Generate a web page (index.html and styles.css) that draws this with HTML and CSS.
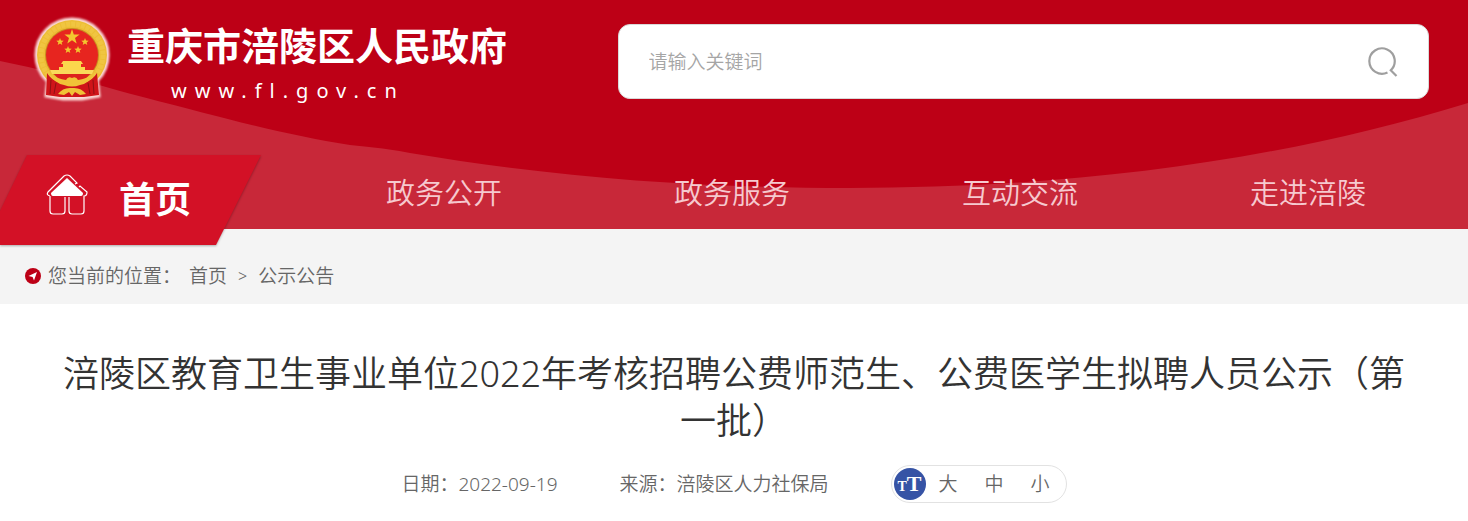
FILE: index.html
```html
<!DOCTYPE html>
<html lang="zh-CN">
<head>
    <meta charset="UTF-8">
    <meta name="viewport" content="width=device-width, initial-scale=1.0">
    <title>重庆市涪陵区人民政府</title>
    <link rel="stylesheet" href="styles.css">
</head>
<body>
    <header class="header">
        <!-- 背景弧线 -->
        <svg class="header-bg" viewBox="0 0 1468 229" preserveAspectRatio="none" aria-hidden="true">
            <path d="M0 61 Q60 73 120 91 C220 117 280 134 350 145 Q385 148 410 153 C560 178 700 188 850 188 C1060 188 1270 164 1468 103 V229 H0 Z" fill="#c82839"/>
        </svg>

        <div class="header-top">
            <a class="logo" href="#">
                <svg class="emblem" viewBox="0 0 85 95" aria-hidden="true">
                    <g class="emblem-glow">
                        <circle cx="42" cy="43" r="36"/>
                        <path d="M18 65 L16 84 L33 87 H52 L69 84 L67 65Z"/>
                    </g>
                    <circle cx="42" cy="43" r="35" fill="#edbd35"/>
                    <circle cx="42" cy="43" r="31" fill="none" stroke="#f0c541" stroke-width="5" stroke-dasharray="4 1"/>
                    <circle cx="42" cy="43" r="27" fill="#c98b21"/>
                    <circle cx="42" cy="43" r="26" fill="#e7251f"/>
                    <g fill="#f3c62f">
                        <path d="M42 17 l1.8 5.5 5.8 .1 -4.6 3.4 1.7 5.6 -4.7-3.3 -4.7 3.3 1.7-5.6 -4.6-3.4 5.8-.1Z"/>
                        <path id="star" d="M30 26 l1 2.6 2.7.1 -2.1 1.7 .7 2.6 -2.3-1.5 -2.3 1.5 .7-2.6 -2.1-1.7 2.7-.1Z"/>
                        <use href="#star" x="25"/>
                        <use href="#star" x="8" y="8"/>
                        <use href="#star" x="18" y="8"/>
                    </g>
                    <path d="M33 49 h18 l2 3 h-2 v3 h4 v3 H29 v-3 h4 v-3 h-2Z" fill="#fbd64c"/>
                    <path d="M20 58 H64 L62 62 H22Z" fill="#f9d95a"/>
                    <!-- 红色绶带 -->
                    <path d="M17 61 Q21 68 30 71 L54 71 Q63 68 67 61 L69 83 L54 85 H30 L16 83Z" fill="#cf1419"/>
                    <path d="M21 68 L20 82 M26 71 L24 82 M63 68 L64 82 M58 71 L60 82" stroke="#8f1014" stroke-width="1"/>
                    <path d="M24 62 H60 Q52 72 42 72 Q32 72 24 62Z" fill="#dd211d"/>
                    <path d="M20 62 Q28 67 36 68 Q38 64 42 66 Q46 64 48 68 Q56 67 64 62 Q60 71 50 73 Q42 76 34 73 Q24 71 20 62Z" fill="#f0c238"/>
                    <path d="M28 82 Q33 75 42 76 Q51 75 56 82 L50 83 L45 80 L42 84 L39 80 L34 83Z" fill="#f0c238"/>
                </svg>
                <span class="logo-text">
                    <span class="logo-name">重庆市涪陵区人民政府</span>
                    <span class="logo-url">www.fl.gov.cn</span>
                </span>
            </a>

            <form class="search">
                <input class="search-input" type="text" placeholder="请输入关键词" aria-label="请输入关键词">
                <button class="search-button" type="button" aria-label="搜索">
                    <svg viewBox="0 0 30 30" width="30" height="30" fill="none" stroke="#9f9f9f" stroke-width="2.2">
                        <path d="M19.5 25.5 A12.7 12.7 0 1 1 22.5 23.5 M22 22.5 L28.5 29"/>
                    </svg>
                </button>
            </form>
        </div>

        <nav class="nav">
            <a class="nav-home" href="#">
                <svg class="nav-home-bg" viewBox="0 0 261 90" preserveAspectRatio="none" aria-hidden="true">
                    <path d="M27 0 H261 L216 90 H0 V56Z" fill="#d31126"/>
                </svg>
                <svg class="nav-home-icon" viewBox="0 0 42 42" fill="none" stroke="#fff" stroke-width="1.2" aria-hidden="true">
                    <path d="M4 22 V37 Q4 40 7 40 H16 Q19 40 19 37 V23 M23 23 V37 Q23 40 26 40 H35 Q38 40 38 37 V22 Q41 22 41 18 L34 12 L33 13 M29 10 L31 9 L24 2 Q21 0 18 2 L2 18 Q0 21 4 22"/>
                    <path d="M21 4 L37 19 Q37 22 35 22 H7 Q5 22 5 19Z" fill="#fff" stroke="none"/>
                </svg>
                <span>首页</span>
            </a>
            <a class="nav-item" href="#">政务公开</a>
            <a class="nav-item" href="#">政务服务</a>
            <a class="nav-item" href="#">互动交流</a>
            <a class="nav-item" href="#">走进涪陵</a>
        </nav>
    </header>

    <!-- 当前位置 -->
    <div class="position">
        <svg class="position-icon" viewBox="0 0 16 16" aria-hidden="true">
            <circle cx="8" cy="8" r="8" fill="#bd0016"/>
            <path d="M12 4 L9 12.5 L7.6 8.9 L3.5 8Z" fill="#fff"/>
        </svg>
        <span>您当前的位置：</span>
        <a href="#">首页</a>
        <span class="position-arrow">&gt;</span>
        <a href="#">公示公告</a>
    </div>

    <main class="article">
        <h1 class="article-title">涪陵区教育卫生事业单位2022年考核招聘公费师范生、公费医学生拟聘人员公示（第一批）</h1>
        <div class="article-info">
            <span>日期：2022-09-19</span>
            <span>来源：涪陵区人力社保局</span>
            <div class="font-size">
                <span class="font-size-icon"><small>T</small>T</span>
                <button type="button">大</button>
                <button type="button">中</button>
                <button type="button">小</button>
            </div>
        </div>
    </main>
</body>
</html>
```
FILE: styles.css
```css
* {
    box-sizing: border-box;
}
body {
    margin: 0;
    font-family: "Noto Sans", "Noto Sans CJK SC", sans-serif;
    font-size: 19px;
    font-weight: 350;
    line-height: 28px;
    color: #666;
    background-color: #fff;
}
a {
    color: inherit;
    text-decoration: none;
}
button {
    padding: 0;
    border: 0;
    background: none;
    font: inherit;
    color: inherit;
    cursor: pointer;
}

/* 头部 */
.header {
    position: relative;
    background-color: #bd0016;
}
.header-bg {
    position: absolute;
    top: 0;
    left: 0;
    width: 100%;
    height: 100%;
}
.header-top {
    position: relative;
    display: flex;
    justify-content: space-between;
    align-items: flex-start;
    padding: 12px 39px 0 30px;
    height: 155px;
}
.logo {
    display: flex;
    gap: 12px;
    color: #fff;
}
.emblem {
    width: 85px;
    height: 95px;
}
.emblem-glow {
    fill: #fbd9d6;
    stroke: #fbd9d6;
    stroke-width: 3;
    filter: blur(1px);
}
.logo-text {
    display: flex;
    flex-direction: column;
    padding-top: 7px;
}
.logo-name {
    font-size: 38px;
    font-weight: bold;
    line-height: 52px;
}
.logo-url {
    padding-left: 44px;
    font-size: 20px;
    font-weight: normal;
    line-height: 40px;
    letter-spacing: 8px;
}
.search {
    display: flex;
    align-items: center;
    width: 58%;
    height: 75px;
    margin-top: 12px;
    padding: 0 30px;
    border: 1px solid #d9d9d9;
    border-radius: 12px;
    background-color: #fff;
}
.search-input {
    flex: 1;
    padding: 0;
    border: 0;
    outline: none;
    font: inherit;
    background: none;
}
.search-input::placeholder {
    color: #a5a5a5;
}
.search-button {
    display: flex;
}

/* 导航 */
.nav {
    position: relative;
    display: grid;
    grid-template-columns: repeat(5, 1fr);
    padding: 0 16px 0 12px;
    height: 74px;
}
.nav-home {
    position: relative;
    display: flex;
    align-items: center;
    gap: 31px;
    height: 90px;
    margin-left: -12px;
    padding-left: 46px;
    font-size: 36px;
    font-weight: bold;
    color: #fff;
}
.nav-home-bg {
    position: absolute;
    top: 0;
    left: 0;
    width: 261px;
    height: 90px;
    filter: drop-shadow(0 1px 1px rgba(0, 0, 0, 0.3));
}
.nav-home-icon {
    position: relative;
    width: 42px;
    height: 42px;
    margin-bottom: 10px;
}
.nav-home span {
    position: relative;
}
.nav-item {
    font-size: 29px;
    line-height: 76px;
    text-align: center;
    color: #f6c9cf;
}

/* 当前位置 */
.position {
    display: flex;
    align-items: center;
    padding: 33px 25px 14px;
    background-color: #f4f4f4;
}
.position-icon {
    width: 16px;
    height: 16px;
    margin-right: 7px;
}
.position a {
    margin-left: 8px;
}
.position-arrow {
    margin: 0 3px 0 11px;
    font-size: 16px;
}

/* 文章 */
.article {
    padding: 46px 48px 18px;
}
.article-title {
    margin: 0;
    font-size: 36px;
    font-weight: 350;
    line-height: 47px;
    text-align: center;
    color: #333;
}
.article-info {
    display: flex;
    justify-content: center;
    align-items: center;
    gap: 62px;
    margin-top: 21px;
}
.font-size {
    display: flex;
    align-items: center;
    gap: 27px;
    padding: 2px 16px 2px 2px;
    border: 1px solid #e2e2e2;
    border-radius: 19px;
}
.font-size-icon {
    width: 32px;
    height: 32px;
    margin-right: -14px;
    border-radius: 50%;
    background-color: #3653a5;
    font-family: "Liberation Serif", serif;
    font-size: 22px;
    font-weight: bold;
    line-height: 32px;
    text-align: center;
    color: #fff;
}
.font-size-icon small {
    font-size: 14px;
}
```
